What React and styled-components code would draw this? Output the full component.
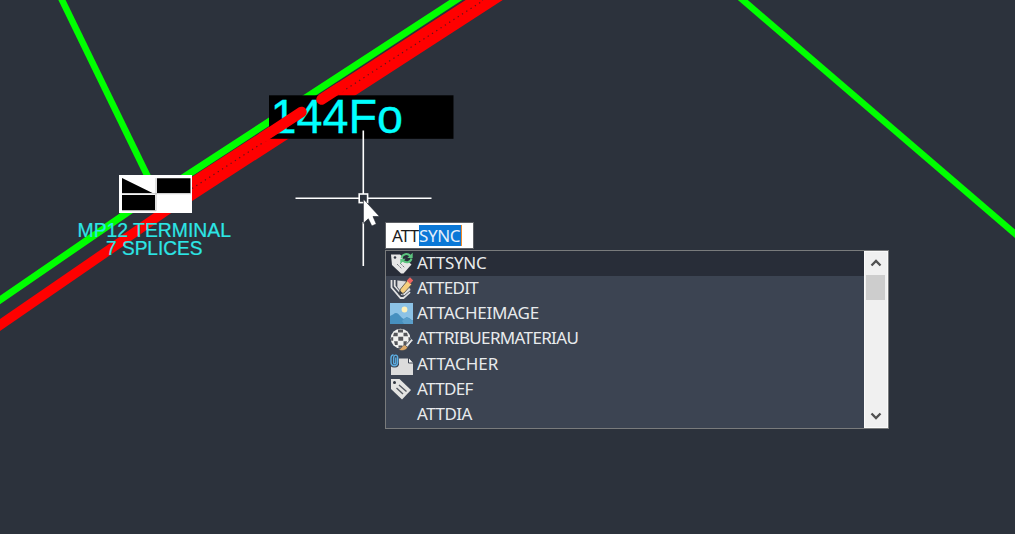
import React from 'react';
import styled, { createGlobalStyle } from 'styled-components';

const GlobalStyle = createGlobalStyle`
  * { box-sizing: border-box; }
  body { margin: 0; background: #2c323c; overflow: hidden; }
`;

const Canvas = styled.main`
  position: relative;
  width: 1015px;
  height: 534px;
  overflow: hidden;
  background: #2c323c;
  font-family: 'Noto Sans', 'Open Sans', sans-serif;
`;

const Drawing = styled.svg`
  display: block;
  width: 1015px;
  height: 534px;
  font-family: 'Liberation Sans', Arial, sans-serif;
`;

const CommandPopup = styled.div`
  position: absolute;
  left: 385px;
  top: 222px;
  width: 504px;
  display: flex;
  flex-direction: column;
  align-items: flex-start;
  gap: 1px;
`;

const CommandInput = styled.div`
  width: 89px;
  height: 27px;
  padding: 0 0 0 6px;
  display: flex;
  align-items: center;
  background: #fff;
  border: 1px solid #5d6065;
  color: #1c1c1c;
  font-size: 17px;
  line-height: 21px;
`;

const Typed = styled.span`
  width: 27px;
  height: 21px;
  letter-spacing: ${(p) => p.$spacing}px;
  white-space: nowrap;
`;

const Completion = styled.span`
  width: 43px;
  height: 21px;
  background: #0a78d7;
  border-right: 1px solid #f08a28;
  color: #e4effb;
  letter-spacing: ${(p) => p.$spacing}px;
  white-space: nowrap;
`;

const SuggestionBox = styled.div`
  width: 504px;
  height: 179px;
  display: flex;
  border: 1.5px solid #797b7c;
  background: #3c4452;
`;

const SuggestionList = styled.ul`
  flex: 1;
  margin: 0;
  padding: 0;
  list-style: none;
`;

const Suggestion = styled.li`
  height: 25.2px;
  padding-left: 4px;
  display: flex;
  align-items: center;
  gap: 4px;
  background: ${(p) => (p.$active ? '#282d38' : 'transparent')};
  color: #e8ebed;
  font-size: 17px;
  line-height: 22px;
`;

const IconSlot = styled.span`
  flex: none;
  width: 23px;
  height: 23px;
  svg { display: block; }
`;

const Label = styled.span`
  padding-bottom: 1.4px;
  letter-spacing: ${(p) => p.$spacing}px;
  white-space: nowrap;
`;

const Scrollbar = styled.div`
  width: 24px;
  padding: 0 2px 0 1px;
  display: flex;
  flex-direction: column;
  background: #f0f0f0;
  border: 1px solid #fafafa;
`;

const ScrollArrow = styled.div`
  height: 22.5px;
  display: flex;
  align-items: center;
  justify-content: center;
`;

const Track = styled.div`
  flex: 1;
`;

const Thumb = styled.div`
  height: 25px;
  background: #cdcdcd;
`;

const Svg = ({ children }) => (
  <svg width="23" height="23" viewBox="0 0 23 23">{children}</svg>
);

const SyncIcon = () => (
  <Svg>
    <path d="M1 2.500h9l11.500 10-8 9h-2.500L2 13z" fill="#e6e6e6" />
    <circle cx="5" cy="5.500" r="1.300" fill="#333842" />
    <path d="M7 12l5 5M10 11l4.500 4.500" stroke="#777b82" strokeWidth="1" strokeDasharray="2.500 1" />
    <path d="M12 1h10v9H13z" fill="#282d38" />
    <path d="M11.500 6C12.500 1.500 17.500 1 20.500 4M21.500 6.500C20.500 11 15.500 11.500 12.500 8.300" fill="none" stroke="#5cc47e" strokeWidth="2" />
    <path d="M22.700.7v5.200h-5.400zM10.300 12V6.800h5.400z" fill="#5cc47e" />
  </Svg>
);

const EditIcon = () => (
  <Svg>
    <path d="M1.500 3v7.500l9 10.500h3l6.500-6" fill="none" stroke="#e2e2e2" strokeWidth="1.800" />
    <path d="M4.700 3v6l8 9" fill="none" stroke="#e2e2e2" strokeWidth="1.800" />
    <path d="M7 3l9 1 5 9-7 6-7-9z" fill="#dedede" stroke="#3c4452" strokeWidth=".7" />
    <path d="M10.500 12L17.500 3.500l4.200 4-7.700 8.500-5 1z" fill="#f6cf7e" stroke="#4c4943" strokeWidth=".8" />
    <path d="M16.800 3.500L20 .3l3.300 3.200-3.300 3.500z" fill="#ed6460" />
    <path d="M8.500 17.500l1.500-4 2.800 2.800z" fill="#343943" />
  </Svg>
);

const ImageIcon = () => (
  <Svg>
    <path d="M0 1h23v21H0z" fill="#8cc2e5" />
    <circle cx="14.500" cy="7.500" r="2.900" fill="#fff0b8" />
    <path d="M0 14C3 13 4 11 6 11c3 0 5 5 8 6 2-2 3-2.500 5-1 1.500 1 2.500 2 4 2.500V22H0z" fill="#4690bf" />
    <path d="M12 19c3-3 5-4 7-2.500 1.500 1 2.500 2 4 2v3.500H14z" fill="#5b9fca" />
  </Svg>
);

const MaterialIcon = () => (
  <Svg>
    <circle cx="10.500" cy="10.500" r="9.800" fill="#f1f1ef" />
    <path d="M8 1.500h5v3H8zM4 4.800h3.700v3.500H3zM13.500 4.800H17l1 3.500h-4.500zM8.300 8.800h4.900v4H8.300zM1 9.500l2.200-.6v3.800H1.200zM4 13.300h3.700V17H5zM13.500 13.300H17L16 17h-2.500zM8.500 17.500h4v2.300h-4zM18.500 8.900l1.500.6v3.200h-1.500z" fill="#55565a" />
    <path d="M15 17.500l6.500-6.800 1.700 1.600-5.700 7z" fill="#e9e9e9" stroke="#3c4452" strokeWidth=".9" />
    <path d="M8.500 21.700c3-.5 3.500-4.700 6.500-4.700l2.500 2.200c-1 3-5.500 4.300-9 2.500z" fill="#dda868" stroke="#3c4452" strokeWidth=".5" />
  </Svg>
);

const AttachIcon = () => (
  <Svg>
    <path d="M1 12h8V5.500h9.500L23 10v12H1z" fill="#dcdcdc" />
    <path d="M18.500 5v5H23" fill="#f5f5f5" stroke="#3c4452" strokeWidth="1" />
    <rect x="0" y="1" width="9" height="13.500" rx="4" fill="#3c4452" />
    <path d="M5.800 4.500v5c0 1.800-2.200 1.800-2.200 0V5C3.600 1.200 7.700 1.200 7.700 5v4c0 5-6.700 5-6.700 0V5c0-2 1-3 2.500-3.300" fill="none" stroke="#5caee3" strokeWidth="1.400" />
  </Svg>
);

const TagIcon = () => (
  <Svg>
    <path d="M1 1h8.500l11.500 11-9 9.500L1 11z" fill="#e4e4e2" />
    <circle cx="4.500" cy="4.500" r="1.500" fill="#31363f" />
    <path d="M6.500 10l6.500 6M9 7l7.500 6.500" stroke="#555a62" strokeWidth="1.400" />
  </Svg>
);

const suggestions = [
  { name: 'ATTSYNC', icon: <SyncIcon />, spacing: -0.3 },
  { name: 'ATTEDIT', icon: <EditIcon />, spacing: -0.7 },
  { name: 'ATTACHEIMAGE', icon: <ImageIcon />, spacing: -0.22 },
  { name: 'ATTRIBUERMATERIAU', icon: <MaterialIcon />, spacing: -0.66 },
  { name: 'ATTACHER', icon: <AttachIcon />, spacing: -0.05 },
  { name: 'ATTDEF', icon: <TagIcon />, spacing: -0.65 },
  { name: 'ATTDIA', icon: null, spacing: -0.5 },
];

const Plan = () => (
  <Drawing viewBox="0 0 1015 534">
    <g fill="none" stroke="#00ff00">
      <path d="M61-2L148 177" strokeWidth="6.500" />
      <path d="M-5 303.500L155 193.500M155 196L462-4" strokeWidth="7" />
      <path d="M737-5L1020 238" strokeWidth="6.500" />
    </g>
    <g fill="none" stroke="#ff0000">
      <path d="M-5 328.500L175 204.500" strokeWidth="9.800" />
      <path d="M180 202.500L500-4.500" strokeWidth="10.500" />
      <path d="M180 191L480-3" strokeWidth="10.500" />
    </g>
    <path d="M192 188.500L481 2" stroke="#5d151b" strokeWidth="1.200" strokeDasharray="1.300 3.800" />

    <rect x="269" y="95.300" width="184.500" height="43.500" fill="#000" />
    <text x="270.500" y="133" fill="#00ffff" stroke="#00ffff" strokeWidth=".3" fontSize="48" textLength="132.500" lengthAdjust="spacingAndGlyphs">144Fo</text>
    <path d="M262 137.900L301.500 112" stroke="#ff0000" strokeWidth="10.500" strokeLinecap="round" />
    <path d="M321.500 99.500L340 87.500" stroke="#ff0000" strokeWidth="10.500" strokeLinecap="round" />

    <rect x="119" y="175" width="73" height="38" fill="#fff" />
    <path d="M122 178L152.500 193H122zM157 178.300h33.500V193H157zM122 195h33v15.300h-33z" fill="#000" />
    <path d="M122 193.700h69M156 178v33M122 210.700h34" fill="none" stroke="#aaa" strokeWidth=".7" />

    <g fill="#2ce6e6" stroke="#2ce6e6" strokeWidth=".2" fontSize="19.500">
      <text x="77.500" y="237.300" textLength="153.500" lengthAdjust="spacingAndGlyphs">MP12 TERMINAL</text>
      <text x="106" y="255.300" textLength="96.500" lengthAdjust="spacingAndGlyphs">7 SPLICES</text>
    </g>

    <path d="M295.500 198.200H359M368 198.200H431.500M363.300 130.500V194M363.300 222V266" stroke="#fff" strokeWidth="1.600" />
    <rect x="359.200" y="194" width="8.400" height="8.600" fill="#2c323c" stroke="#fff" strokeWidth="1.600" />
    <path d="M363.400 199V223.300L368.300 218.800 371.800 226 376.300 224 373 216.500H379.500z" fill="#fff" stroke="#1d222b" strokeWidth=".6" />
  </Drawing>
);

const Arrow = ({ d }) => (
  <svg width="12" height="10" viewBox="0 0 12 10">
    <path d={d} fill="none" stroke="#505050" strokeWidth="2.300" />
  </svg>
);

export default function App() {
  return (
    <>
      <GlobalStyle />
      <Canvas>
        <Plan />
        <CommandPopup>
          <CommandInput>
            <Typed $spacing={-0.8}>ATT</Typed>
            <Completion $spacing={-0.4}>SYNC</Completion>
          </CommandInput>
          <SuggestionBox>
            <SuggestionList>
              {suggestions.map((s, i) => (
                <Suggestion key={s.name} $active={i === 0}>
                  <IconSlot>{s.icon}</IconSlot>
                  <Label $spacing={s.spacing}>{s.name}</Label>
                </Suggestion>
              ))}
            </SuggestionList>
            <Scrollbar>
              <ScrollArrow><Arrow d="M1.500 7.500L6 3l4.500 4.500" /></ScrollArrow>
              <Track><Thumb /></Track>
              <ScrollArrow><Arrow d="M1.500 2.500L6 7l4.500-4.500" /></ScrollArrow>
            </Scrollbar>
          </SuggestionBox>
        </CommandPopup>
      </Canvas>
    </>
  );
}
